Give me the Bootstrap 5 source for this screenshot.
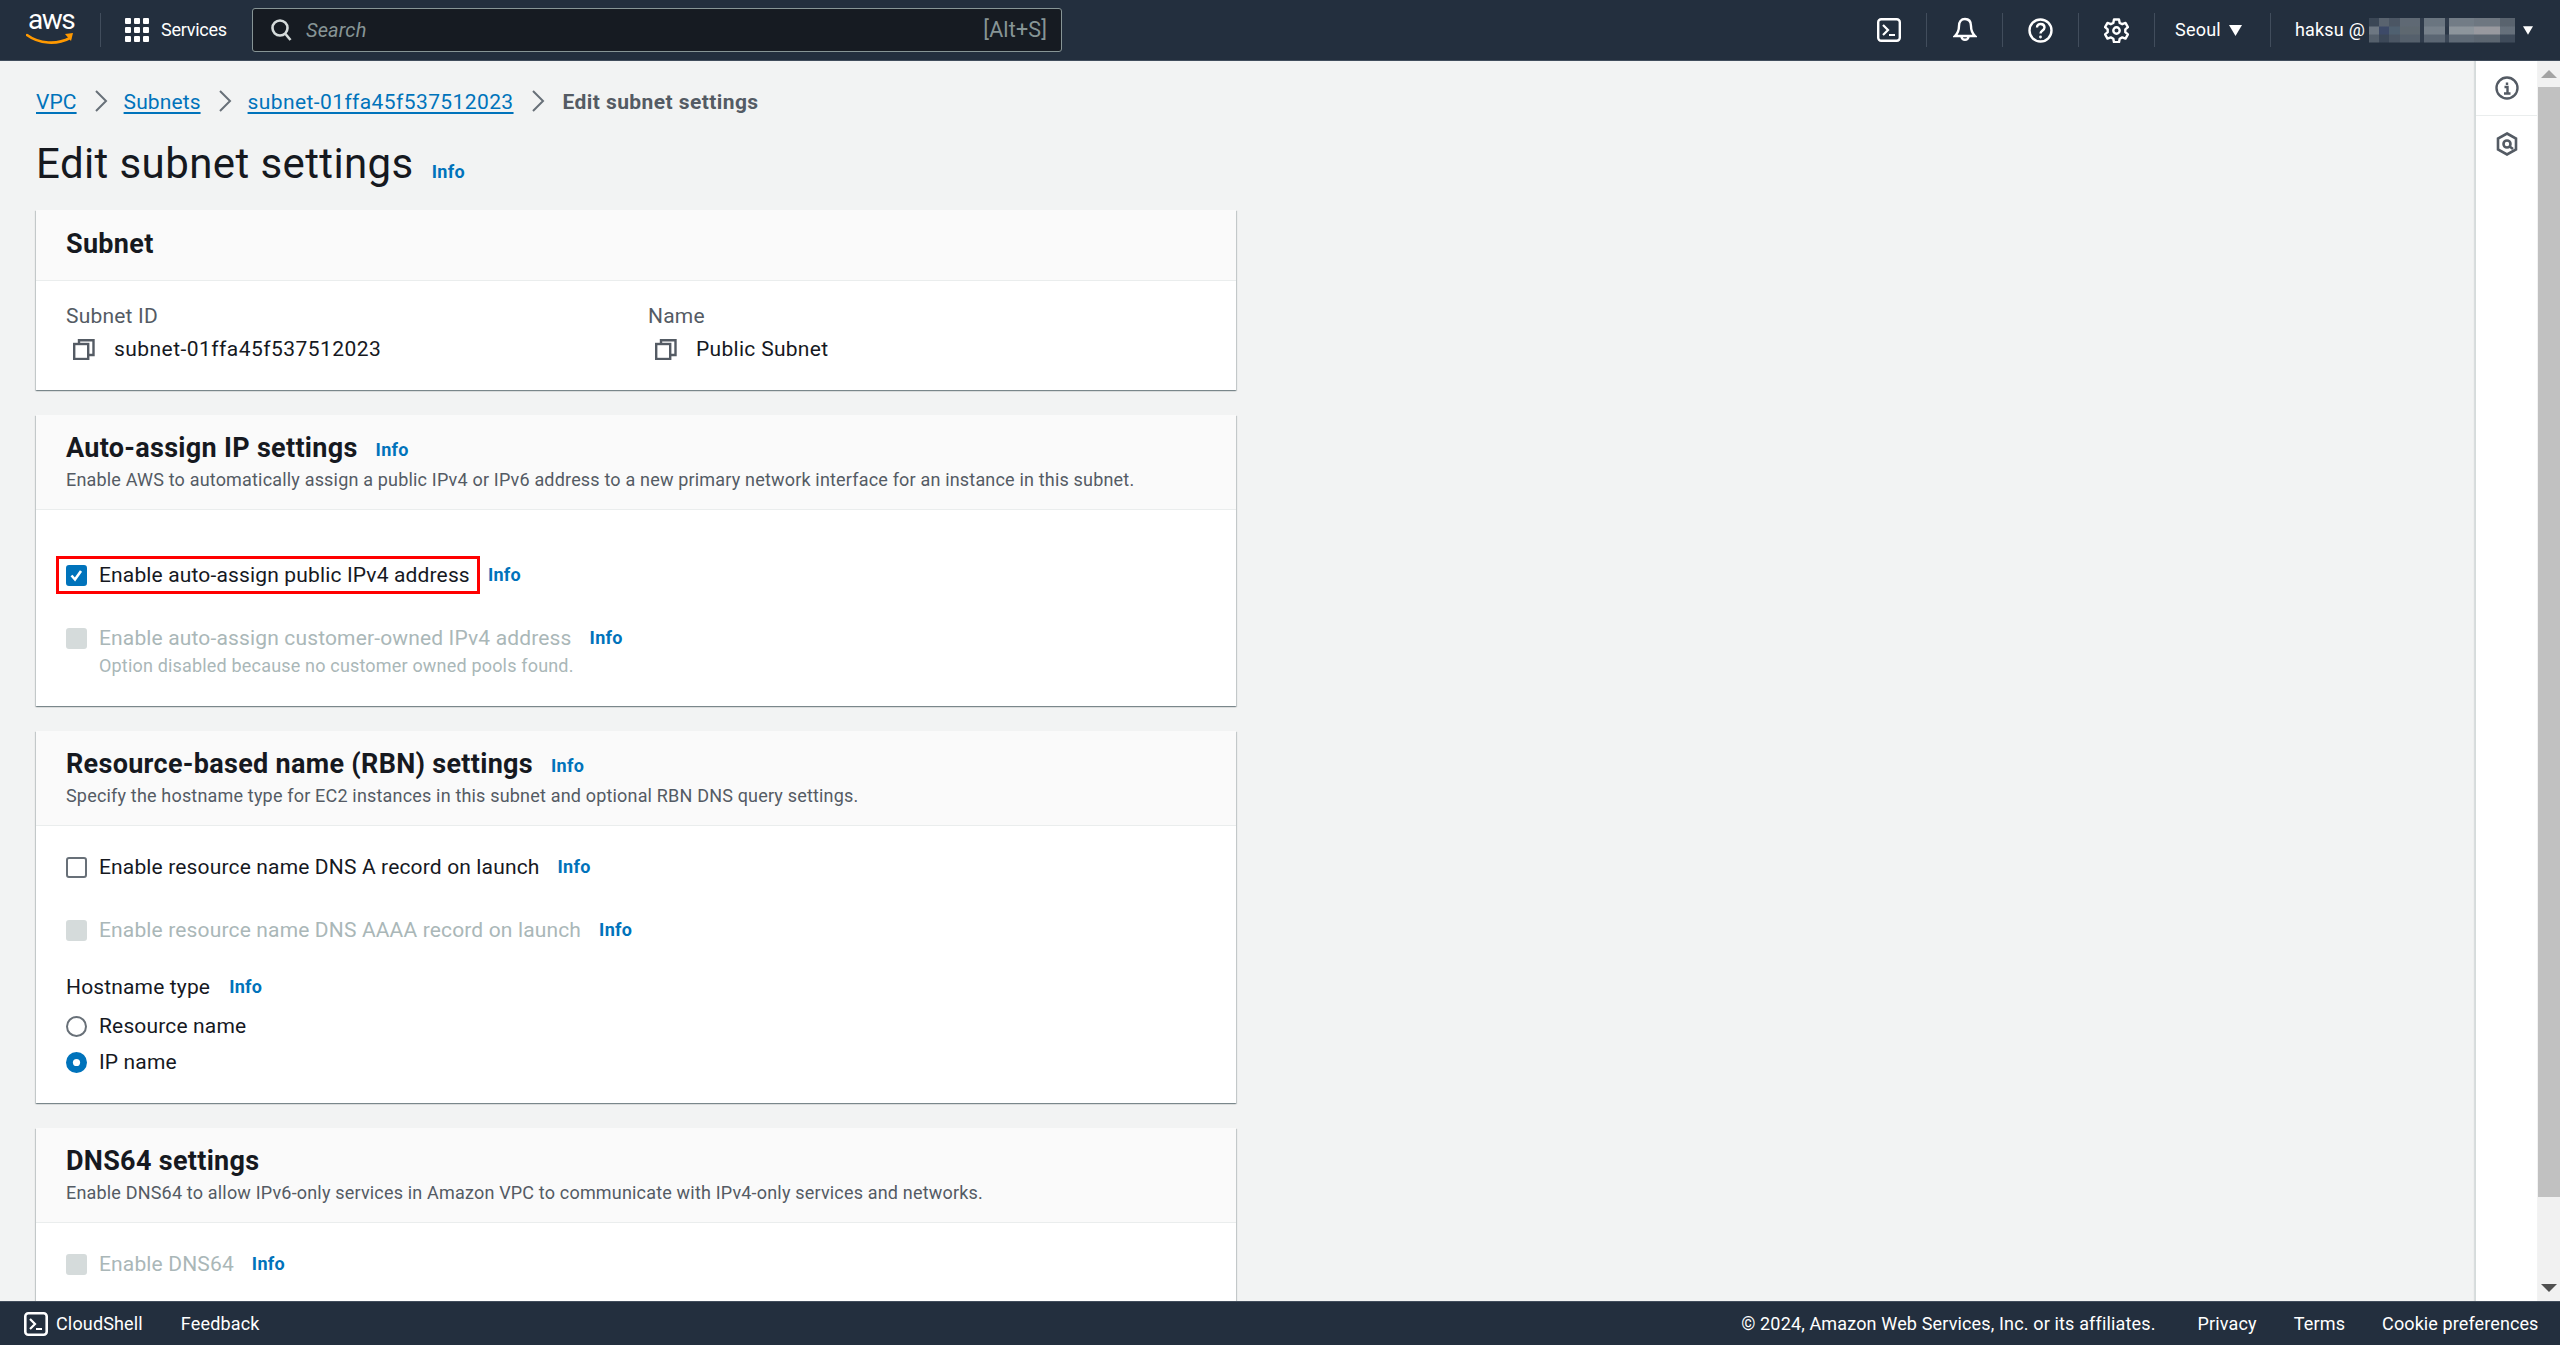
<!doctype html>
<html lang="en"><head><meta charset="utf-8"><title>Edit subnet settings</title>
<link href="https://cdn.jsdelivr.net/npm/bootstrap@5.3.0/dist/css/bootstrap.min.css" rel="stylesheet">
<style>
html,body{height:100%}
body{font-family:Roboto,"Noto Sans",sans-serif;font-size:21px;line-height:30px;letter-spacing:.15px;color:#16191f;background:#f2f3f3;overflow:hidden}
.page-shell{height:1345px}
.topbar{height:61px;background:#232f3e;border-bottom:1px solid #414d5c;color:#fff;font-size:18px;flex:none}
.logo-box{width:100px;height:60px;padding-left:28px;flex:none}
.logo-txt{font-weight:400;font-size:28px;line-height:24px;letter-spacing:-1.500px;display:block;margin-top:8px;height:25px}
.logo-smile{display:block;width:48px;height:13px;margin-top:0;margin-left:-2px}
.vsep{width:1px;height:34px;background:#414d5c}
.services{margin-left:24px;width:127px;gap:12px;letter-spacing:-.25px}
.searchbox{width:810px;height:44px;background:#161b22;border:1px solid #879596;border-radius:3px;padding:0 14px 0 17px;color:#879596;font-size:20px}
.searchbox em{margin-left:14px;font-size:20px}
.alt-key{font-size:21.5px}
.top-right{margin-left:auto;height:60px;padding-right:27px;letter-spacing:.2px}
.ticon{width:75px;justify-content:center}
.region-box{padding:0 28px 0 20px}
.usermos{width:146px;height:25px;background-image:
  linear-gradient(90deg,#3b4756 0 7%,#59636f 7% 14%,#4b5664 14% 21%,#5f6974 21% 35%,#2f3b4b 35% 38%,#6a7580 38% 52%,#2f3b4b 52% 55%,#727c86 55% 72%,#6e7781 72% 90%,#59636e 90% 100%),
  linear-gradient(90deg,#6d7782 0 7%,#3d4a68 7% 14%,#4f6070 14% 21%,#5e6870 21% 35%,#2f3b4b 35% 38%,#77818b 38% 52%,#2b3747 52% 55%,#8d959c 55% 72%,#98999f 72% 90%,#66707b 90% 100%),
  linear-gradient(90deg,#55606c 0 7%,#3c4858 7% 14%,#4b5664 14% 21%,#55606c 21% 35%,#2f3b4b 35% 38%,#5b6673 38% 52%,#3a4656 52% 55%,#5f6a76 55% 72%,#5c6671 72% 90%,#3f4b5a 90% 100%);
  background-size:100% 34%,100% 34%,100% 34%;background-position:0 0,0 50%,0 100%;background-repeat:no-repeat}
.main-area{flex:1 1 auto;min-height:0}
.content-pane{flex:1 1 auto;min-width:0;padding:0 0 0 36px;overflow:hidden}
.breadcrumb{--bs-breadcrumb-margin-bottom:0;height:80px;align-items:center;padding-top:1px;font-size:21px}
.breadcrumb-item+.breadcrumb-item{padding-left:0}
.breadcrumb-item+.breadcrumb-item::before{display:none}
.breadcrumb-item a,.ilink{color:#0073bb}
.breadcrumb-item a{text-decoration:underline;text-underline-offset:3px;letter-spacing:.1px}
.breadcrumb-item a.wide-id{letter-spacing:.4px}
.breadcrumb-item.active{color:#545b64;font-weight:700;font-size:21px;letter-spacing:.42px}
.crumb-sep{margin:0 16px 0 17px;vertical-align:-3px}
.wide-id+.crumb-sep{margin-right:18px}
.page-title{font-size:42px;font-weight:400;line-height:50px;margin:0 0 3px;color:#16191f;letter-spacing:.4px}
.ilink{font-size:18px;font-weight:700;text-decoration:none;margin-left:18px;letter-spacing:.3px}
.title-row{height:49px;margin-bottom:20px;align-items:center}
.title-row .ilink{margin-top:12px}
.set-card{width:1200px;border:0;border-radius:0;background:#fff;margin-bottom:25px;box-shadow:0 1px 1px 0 rgba(0,28,36,.3),1px 1px 1px 0 rgba(0,28,36,.15),-1px 1px 1px 0 rgba(0,28,36,.15)}
.set-card .card-header{background:#fafafa;border-bottom:1px solid #eaeded;border-radius:0;padding:0 30px}
.head-single{height:71px;display:flex;align-items:center;padding-bottom:3px!important}
.head-double{height:95px;padding-top:15px!important}
.card-ttl{font-size:27px;line-height:36px;font-weight:700;margin:0;color:#16191f;letter-spacing:.3px}
.card-desc{font-size:18px;line-height:26px;color:#545b64;margin-top:1px;letter-spacing:.18px}
.set-card .card-body{padding:0 30px}
.body-info{height:109px;padding-top:20px!important}
.fld-label{color:#545b64;line-height:30px;height:30px;letter-spacing:.2px}
.fld-val{line-height:30px;margin-top:3px;letter-spacing:.3px}
.wide-val{letter-spacing:.45px}
.fld-col{width:582px;flex:none}
.copyic{margin:0 19px 0 7px;flex:none}
.chk-row{display:flex;align-items:center;height:30px;gap:12px}
.chk-row .ilink{margin-left:6px}
.form-check-input{width:21px;height:21px;margin:0;flex:none;border:2px solid #687078;opacity:1!important}
.form-check-input[type=checkbox]{border-radius:3px}
.form-check-input:checked{background-color:#0073bb;border-color:#0073bb}
.form-check-input[type=checkbox]:checked{background-size:100%;background-image:url("data:image/svg+xml,%3csvg xmlns='http://www.w3.org/2000/svg' viewBox='0 0 17 17'%3e%3cpath d='M3.500 8.500l3.500 4 6-8.500' fill='none' stroke='%23fff' stroke-width='2.600'/%3e%3c/svg%3e")}
.form-check-input:disabled{background-color:#d5dbdb;border-color:#d5dbdb}
.form-check-input[type=radio]:checked{background-size:100%;background-image:url("data:image/svg+xml,%3csvg xmlns='http://www.w3.org/2000/svg' viewBox='-4 -4 8 8'%3e%3ccircle r='1.700' fill='%23fff'/%3e%3c/svg%3e")}
.hl-box{display:inline-flex;align-items:center;gap:12px;border:3px solid red;padding:3px 7px;margin:-6px -10px;height:38px;line-height:26px}
.dim{color:#aab7b8}
.dim-sub{color:#aab7b8;font-size:18px;line-height:26px;margin-left:33px;margin-top:0;letter-spacing:.18px}
.body-auto{height:196px;padding-top:50px!important}
.body-rbn{height:277px;padding-top:26px!important}
.body-dns{height:90px;padding-top:26px!important}
.gap-row{margin-top:33px}
.host-row{margin-top:27px;height:30px;display:flex;align-items:center}
.host-row .ilink{margin-left:19px}
.rad-row{margin-top:9px}
.rad-row2{margin-top:6px}
.side-rail{width:62px;background:#fff;border-left:1px solid #d5dbdb;flex:none;box-shadow:-1px 0 1px rgba(0,28,36,.1)}
.rail-btn{height:55px;display:flex;align-items:center;justify-content:center}
.rail-btn.first{border-bottom:1px solid #eaeded}
.scroll-rail{width:22px;flex:none;background:#f1f1f1;margin-left:1px;display:flex;flex-direction:column;align-items:center}
.sc-up,.sc-down{height:26px;flex:none;display:flex;align-items:center;justify-content:center}
.sc-thumb{width:100%;height:1110px;background:#c1c1c1;flex:none}
.sc-fill{flex:1}
.bottombar{height:44px;background:#232f3e;border-top:1px solid #414d5c;color:#fff;font-size:18px;flex:none;padding:0 21.500px 0 24px}
.bottombar .bitem{margin-left:38px}
.bottombar .bright{margin-left:auto;letter-spacing:.15px}
.bottombar .bleg{margin-left:42px}
.bottombar .bitem-tight{margin-left:37px}
.foot-sp{letter-spacing:.1px}
</style></head>
<body>
<div class="page-shell d-flex flex-column">
<header class="topbar d-flex align-items-center">
  <div class="logo-box">
    <span class="logo-txt">aws</span>
    <svg class="logo-smile" viewBox="0 0 48 13"><path d="M1 2c12 9 30 10 43 3" fill="none" stroke="#f90" stroke-width="2.600" stroke-linecap="round"/><path d="M39 1l8-1-2 8z" fill="#f90"/></svg>
  </div>
  <div class="vsep"></div>
  <div class="services d-flex align-items-center">
    <svg width="24" height="24" viewBox="0 0 24 24" fill="#fff"><rect width="6" height="6" rx="1"/><rect x="9" width="6" height="6" rx="1"/><rect x="18" width="6" height="6" rx="1"/><rect y="9" width="6" height="6" rx="1"/><rect x="9" y="9" width="6" height="6" rx="1"/><rect x="18" y="9" width="6" height="6" rx="1"/><rect y="18" width="6" height="6" rx="1"/><rect x="9" y="18" width="6" height="6" rx="1"/><rect x="18" y="18" width="6" height="6" rx="1"/></svg>
    <span>Services</span>
  </div>
  <div class="searchbox d-flex align-items-center">
    <svg width="22" height="24" viewBox="0 0 22 24" fill="none" stroke="#d5dbdb" stroke-width="2.600"><circle cx="10" cy="10" r="7.500"/><path d="M15.500 16l5 6"/></svg>
    <em>Search</em><span class="ms-auto alt-key">[Alt+S]</span>
  </div>
  <div class="top-right d-flex align-items-center">
    <div class="d-flex ticon"><svg width="24" height="24" viewBox="0 0 24 24" fill="none" stroke="#fff" stroke-width="2.400"><rect x="1.200" y="1.200" width="21.600" height="21.600" rx="3"/><path d="M6 7l5 5-5 5M12 17h6" stroke-width="2.200"/></svg></div>
    <div class="vsep"></div>
    <div class="d-flex ticon"><svg width="24" height="26" viewBox="0 0 24 26" fill="none" stroke="#fff" stroke-width="2.400"><path d="M12 2c-4 0-6 3-6 7 0 5-1 7-4 10h20c-3-3-4-5-4-10 0-4-2-7-6-7zM8.500 20a3.600 3.600 0 0 0 7 0"/></svg></div>
    <div class="vsep"></div>
    <div class="d-flex ticon"><svg width="25" height="25" viewBox="0 0 25 25" fill="none" stroke="#fff" stroke-width="2.400"><circle cx="12.500" cy="12.500" r="11"/><path d="M9 9.500c0-5 7.500-4.500 7.500 0 0 3-4 3-4 6"/><circle cx="12.500" cy="19" r=".6" stroke-width="1.600"/></svg></div>
    <div class="vsep"></div>
    <div class="d-flex ticon"><svg width="25" height="25" viewBox="0 0 25 25" fill="none" stroke="#fff" stroke-width="2.400" stroke-linejoin="round"><path d="M10 1.500h5l.7 3.500 2.500 1.200 3.300-1.300 2.400 4.200-2.600 2.300v2.800l2.600 2.200-2.400 4.200-3.300-1.200-2.500 1.400-.7 3.500h-5l-.7-3.500-2.500-1.400-3.300 1.200-2.400-4.200 2.600-2.200v-2.800L1.100 9.100l2.400-4.200 3.300 1.300L9.300 5z"/><circle cx="12.500" cy="12.500" r="3.200"/></svg></div>
    <div class="vsep"></div>
    <div class="d-flex align-items-center gap-2 region-box"><span>Seoul</span><svg width="13" height="11" viewBox="0 0 13 11"><path d="M0 0h13L6.500 11z" fill="#fff"/></svg></div>
    <div class="vsep"></div>
    <div class="d-flex align-items-center ps-4"><span class="me-1">haksu @</span><span class="usermos"></span><svg class="ms-2" width="10" height="11" viewBox="0 0 13 11"><path d="M0 0h13L6.500 11z" fill="#fff"/></svg></div>
  </div>
</header>

<div class="main-area d-flex">
  <main class="content-pane">
    <nav aria-label="breadcrumb"><ol class="breadcrumb">
      <li class="breadcrumb-item"><a href="#">VPC</a><svg class="crumb-sep" width="14" height="22" viewBox="0 0 14 22" fill="none" stroke="#687078" stroke-width="2"><path d="M2 1l10 10L2 21"/></svg></li>
      <li class="breadcrumb-item"><a href="#">Subnets</a><svg class="crumb-sep" width="14" height="22" viewBox="0 0 14 22" fill="none" stroke="#687078" stroke-width="2"><path d="M2 1l10 10L2 21"/></svg></li>
      <li class="breadcrumb-item"><a href="#" class="wide-id">subnet-01ffa45f537512023</a><svg class="crumb-sep" width="14" height="22" viewBox="0 0 14 22" fill="none" stroke="#687078" stroke-width="2"><path d="M2 1l10 10L2 21"/></svg></li>
      <li class="breadcrumb-item active">Edit subnet settings</li>
    </ol></nav>
    <div class="d-flex title-row"><h1 class="page-title">Edit subnet settings</h1><a href="#" class="ilink">Info</a></div>

    <section class="card set-card">
      <div class="card-header head-single"><h2 class="card-ttl">Subnet</h2></div>
      <div class="card-body body-info d-flex">
        <div class="fld-col"><div class="fld-label">Subnet ID</div><div class="fld-val wide-val d-flex align-items-center"><svg class="copyic" width="22" height="21" viewBox="0 0 22 21" fill="none" stroke="#545b64" stroke-width="2.400"><rect x="1.200" y="5" width="14" height="15"/><path d="M6 5V1.200h14.500V16h-5"/></svg>subnet-01ffa45f537512023</div></div>
        <div class="fld-col"><div class="fld-label">Name</div><div class="fld-val d-flex align-items-center"><svg class="copyic" width="22" height="21" viewBox="0 0 22 21" fill="none" stroke="#545b64" stroke-width="2.400"><rect x="1.200" y="5" width="14" height="15"/><path d="M6 5V1.200h14.500V16h-5"/></svg>Public Subnet</div></div>
      </div>
    </section>

    <section class="card set-card">
      <div class="card-header head-double"><div class="d-flex align-items-center"><h2 class="card-ttl">Auto-assign IP settings</h2><a href="#" class="ilink mt-1">Info</a></div>
      <div class="card-desc">Enable AWS to automatically assign a public IPv4 or IPv6 address to a new primary network interface for an instance in this subnet.</div></div>
      <div class="card-body body-auto">
        <div class="chk-row"><span class="hl-box"><input class="form-check-input" type="checkbox" checked aria-label="a"><span>Enable auto-assign public IPv4 address</span></span><a href="#" class="ilink">Info</a></div>
        <div class="chk-row dim gap-row"><input class="form-check-input" type="checkbox" disabled aria-label="b"><span>Enable auto-assign customer-owned IPv4 address</span><a href="#" class="ilink">Info</a></div>
        <div class="dim-sub">Option disabled because no customer owned pools found.</div>
      </div>
    </section>

    <section class="card set-card">
      <div class="card-header head-double"><div class="d-flex align-items-center"><h2 class="card-ttl">Resource-based name (RBN) settings</h2><a href="#" class="ilink mt-1">Info</a></div>
      <div class="card-desc">Specify the hostname type for EC2 instances in this subnet and optional RBN DNS query settings.</div></div>
      <div class="card-body body-rbn">
        <div class="chk-row"><input class="form-check-input" type="checkbox" aria-label="c"><span>Enable resource name DNS A record on launch</span><a href="#" class="ilink">Info</a></div>
        <div class="chk-row dim gap-row"><input class="form-check-input" type="checkbox" disabled aria-label="d"><span>Enable resource name DNS AAAA record on launch</span><a href="#" class="ilink">Info</a></div>
        <div class="host-row"><span>Hostname type</span><a href="#" class="ilink">Info</a></div>
        <div class="chk-row rad-row"><input class="form-check-input" type="radio" name="hn" aria-label="e"><span>Resource name</span></div>
        <div class="chk-row rad-row2"><input class="form-check-input" type="radio" name="hn" checked aria-label="f"><span>IP name</span></div>
      </div>
    </section>

    <section class="card set-card">
      <div class="card-header head-double"><div class="d-flex align-items-center"><h2 class="card-ttl">DNS64 settings</h2></div>
      <div class="card-desc">Enable DNS64 to allow IPv6-only services in Amazon VPC to communicate with IPv4-only services and networks.</div></div>
      <div class="card-body body-dns">
        <div class="chk-row dim"><input class="form-check-input" type="checkbox" disabled aria-label="g"><span>Enable DNS64</span><a href="#" class="ilink">Info</a></div>
      </div>
    </section>
  </main>
  <aside class="side-rail">
    <div class="rail-btn first"><svg width="24" height="24" viewBox="0 0 24 24" fill="none" stroke="#545b64" stroke-width="2.400"><circle cx="12" cy="12" r="10.500"/><path d="M9.500 11h3v6M9 17.500h6.500M12 6.500v2.500" stroke-width="2.400"/></svg></div>
    <div class="rail-btn"><svg width="22" height="24" viewBox="0 0 22 24" fill="none" stroke="#545b64" stroke-width="2.600"><path d="M11 1.500l9 5v11l-9 5-9-5v-11z"/><circle cx="11" cy="12" r="3.500"/><path d="M13 14l4 3"/></svg></div>
  </aside>
  <div class="scroll-rail">
    <div class="sc-up"><svg width="16" height="8" viewBox="0 0 16 8"><path d="M0 8L8 0l8 8z" fill="#a3a3a3"/></svg></div>
    <div class="sc-thumb"></div><div class="sc-fill"></div>
    <div class="sc-down"><svg width="16" height="8" viewBox="0 0 16 8"><path d="M0 0l8 8 8-8z" fill="#505050"/></svg></div>
  </div>
</div>

<footer class="bottombar d-flex align-items-center">
  <svg class="me-2" width="24" height="24" viewBox="0 0 24 24" fill="none" stroke="#fff" stroke-width="2.600"><rect x="1.300" y="1.300" width="21.400" height="21.400" rx="3"/><path d="M6 7l5 5-5 5M12 17h6" stroke-width="2.200"/></svg>
  <span>CloudShell</span><span class="bitem">Feedback</span>
  <span class="bright">© 2024, Amazon Web Services, Inc. or its affiliates.</span><span class="bleg">Privacy</span><span class="bitem-tight">Terms</span><span class="bitem-tight foot-sp">Cookie preferences</span>
</footer>
</div>
<script src="https://cdn.jsdelivr.net/npm/bootstrap@5.3.0/dist/js/bootstrap.bundle.min.js"></script>
</body></html>
